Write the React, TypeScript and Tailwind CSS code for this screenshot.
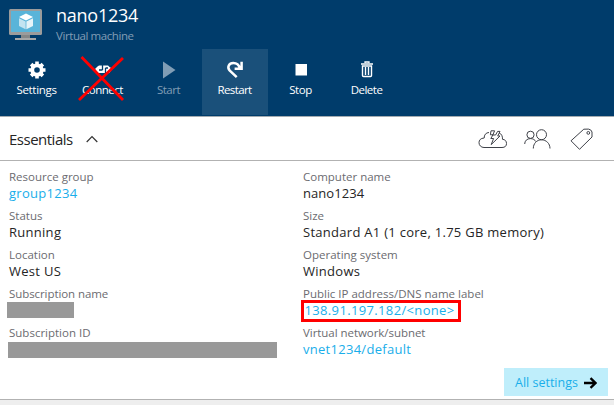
import type { ReactNode } from "react";

type CommandProps = { label: string; icon: ReactNode; tone?: string; tracking?: string };

function Command({ label, icon, tone = "text-white", tracking = "tracking-[-0.5px]" }: CommandProps) {
  return (
    <button className={`flex h-[66px] w-[66px] flex-col items-center pt-3 pr-px ${tone}`}>
      <svg className="h-[18px] w-[18px]" viewBox="0 0 18 18">{icon}</svg>
      <span className={`mt-[3px] h-4 text-[11.5px] leading-4 whitespace-nowrap ${tracking}`}>{label}</span>
    </button>
  );
}

type FieldProps = { label: string; labelTracking?: string; children: ReactNode };

function Field({ label, labelTracking = "", children }: FieldProps) {
  return (
    <div className="h-[39px]">
      <div className={`h-4 text-[11.5px] leading-4 whitespace-nowrap text-[#6b6b70] ${labelTracking}`}>{label}</div>
      <div className="h-4 text-[13px] leading-4 tracking-[0.28px] whitespace-nowrap">{children}</div>
    </div>
  );
}

function MachineIcon() {
  return (
    <svg className="mt-[9px] h-8 w-[33px]" viewBox="0 0 33 32">
      <rect width="33" height="26" rx="1.5" fill="#9b9c9c" />
      <rect x="2" y="2" width="29" height="21" fill="#59b4d9" />
      <path d="M12 26h9v3h6v2H6v-2h6z" fill="#858787" />
      <path d="M6 29h21v2H6z" fill="#a5a6a6" />
      <path d="M17 4.5l7 3.5-7 3.6L10 8z" fill="#fff" />
      <path d="M10 9.2l6.6 3.2v7.8L10 17z" fill="#c3e4f1" />
      <path d="M24 9.2l-6.6 3.2v7.8L24 17z" fill="#e6f4f9" />
    </svg>
  );
}

export default function App() {
  return (
    <div className="flex h-[405px] w-[614px] flex-col overflow-hidden bg-white font-['Open_Sans','Noto_Sans',sans-serif] text-[#252525]">
      <header className="h-[117px] border-b border-[#a3abb1] bg-[#003c6b]">
        <div className="flex h-[49px] pl-[9px]">
          <MachineIcon />
          <div className="ml-[14px] whitespace-nowrap">
            <div className="mt-[3px] h-[25px] text-[18px] leading-6 tracking-[-0.25px] text-white">nano1234</div>
            <div className="h-4 text-[11.5px] leading-4 tracking-[-0.42px] text-[#809db5]">Virtual machine</div>
          </div>
        </div>
        <nav className="flex pl-1">
          <Command
            label="Settings"
            tracking="tracking-[-0.3px]"
            icon={
              <g transform="translate(9 9)">
                <circle r="4.7" fill="none" stroke="currentColor" strokeWidth="3.8" />
                <path d="M-1.8-5.5V-8.5H1.8V-5.5ZM-1.8 5.5V8.5H1.8V5.5ZM-5.5-1.8H-8.5V1.8H-5.5ZM5.5-1.8H8.5V1.8H5.5Z" fill="currentColor" />
                <path d="M-1.8-5.5V-8.3H1.8V-5.5ZM-1.8 5.5V8.3H1.8V5.5ZM-5.5-1.8H-8.3V1.8H-5.5ZM5.5-1.8H8.3V1.8H5.5Z" transform="rotate(45)" fill="currentColor" />
              </g>
            }
          />
          <div className="relative">
            <Command
              label="Connect"
              icon={
                <>
                  <path d="M1 8l2.5-2.5L5 4.5h9l1.5 1.5L18 7.5l-2.5 4.5h-12z" fill="currentColor" />
                  <path d="M8.5 4v5M5 9h3.5M11.5 7H14M11.5 7v5" stroke="#003c6b" strokeWidth="1.3" fill="none" />
                </>
              }
            />
            <svg className="absolute top-0 left-0 h-[66px] w-[66px]" viewBox="0 0 66 66">
              <path d="M11.5 8L53 51M53 9L9 51" stroke="#f00" strokeWidth="2.8" />
            </svg>
          </div>
          <Command label="Start" tone="text-[#809db5]" icon={<path d="M3 0.5L15.5 9 3 17.5z" fill="currentColor" />} />
          <Command
            label="Restart"
            tracking="tracking-[-0.6px]"
            tone="bg-[#1a507a] text-white"
            icon={<path d="M10.7 16.2L3.8 9.6C0.7 6.3 3 1.9 7.3 1.9c4 0 5.8 2.4 6.6 5.2M8.6 7.8h7V0.8" fill="none" stroke="currentColor" strokeWidth="2.5" />}
          />
          <Command label="Stop" icon={<path d="M3.5 3h11.5v11.5H3.5z" fill="currentColor" />} />
          <Command
            label="Delete"
            icon={
              <>
                <path d="M7 2V1h4v1M3 3h12" fill="none" stroke="currentColor" strokeWidth="1.3" />
                <path d="M4.5 5v9.5q0 1 1 1h7q1 0 1-1V5zM7.5 6v8M10.5 6v8" fill="none" stroke="currentColor" strokeWidth="1.4" />
              </>
            }
          />
        </nav>
      </header>

      <section className="flex h-11 items-center border-b border-[#b2b2b2] pr-[21px] pl-[9px]">
        <h2 className="w-[65px] text-[15px] leading-5 tracking-[-0.5px]">Essentials</h2>
        <svg className="ml-3 h-3 w-3" viewBox="0 0 12 12" fill="none" stroke="#333" strokeWidth="1.2">
          <path d="M0.7 9L6 3.5 11.3 9" />
        </svg>
        <div className="ml-auto flex text-[#3f4249]">
          <svg className="h-[22px] w-[29px]" viewBox="0 0 29 22" fill="none" stroke="currentColor" strokeWidth="1">
            <path d="M11 4.5C8 4.5 6 7 6.2 10 2.5 10.2 1 12.2 1 14.7S3 19.5 6 19.5h18c3 0 4.5-1.5 4.5-4s-1.5-4-4-4.2c.2-3-1-5.6-3.5-6.4" />
            <path d="M13 2.8h3.6L14.8 7h2.8l2-3.6h2.4L19.7 8H22l-8.8 8.6 2.4-6.1h-2.8L15 6.8h-2.6z" />
          </svg>
          <svg className="ml-[17px] h-[22px] w-[27px]" viewBox="0 0 27 22" fill="none" stroke="currentColor" strokeWidth="1">
            <circle cx="17.5" cy="6.7" r="5" />
            <circle cx="6.5" cy="6.8" r="3.6" />
            <path d="M9.3 20.5c0-5 3.5-8.7 8.2-8.7s8.5 3.7 8.5 8.7M0.7 16C0.7 12.8 3 10.6 6.5 10.6c2.6 0 4.4 1.2 5.3 3" />
          </svg>
          <svg className="ml-[19px] h-[22px] w-[23px]" viewBox="0 0 23 22" fill="none" stroke="currentColor" strokeWidth="1">
            <path d="M13.8 1.2L1 12.8l8.5 8.5L22 9V4q-.8-2.6-3.5-2.9z" />
            <circle cx="18.3" cy="4.9" r="1.4" />
          </svg>
        </div>
      </section>

      <section className="flex h-[238px] flex-col">
        <div className="flex h-[207px] pt-[8px] pl-[9px]">
          <div className="w-[294px]">
            <Field label="Resource group"><a className="text-[#19aeea]">group1234</a></Field>
            <Field label="Status">Running</Field>
            <Field label="Location">West US</Field>
            <Field label="Subscription name" labelTracking="tracking-[-0.08px]">
              <div className="-ml-0.5 h-4 w-[67px] bg-[#999]" />
            </Field>
            <Field label="Subscription ID">
              <div className="-ml-px h-4 w-[269px] translate-y-px bg-[#999]" />
            </Field>
          </div>
          <div className="w-[290px]">
            <Field label="Computer name"><span className="tracking-[0.05px]">nano1234</span></Field>
            <Field label="Size">Standard A1 (1 core, 1.75 GB memory)</Field>
            <Field label="Operating system">Windows</Field>
            <Field label="Public IP address/DNS name label">
              <div className="relative">
                <a className="pl-[1.5px] tracking-[0.35px] text-[#19aeea]">138.91.197.182/&lt;none&gt;</a>
                <div className="absolute -top-0.5 -left-0.5 h-[22px] w-[160px] border-[3px] border-[#f00]" />
              </div>
            </Field>
            <Field label="Virtual network/subnet" labelTracking="tracking-[-0.05px]"><a className="text-[#19aeea]">vnet1234/default</a></Field>
          </div>
        </div>
        <button className="mr-[6px] ml-auto flex h-7 w-[104px] shrink-0 items-center bg-[#bfeefb] pt-0.5 pl-[11px] text-[12.5px] text-[#19aeea]">
          <span className="w-[64px] text-left whitespace-nowrap">All settings</span>
          <svg className="ml-[5px] h-3 w-[13px]" viewBox="0 0 13 12" fill="none" stroke="#000" strokeWidth="2.3">
            <path d="M0 6h11M6.5 1.2L11.5 6l-5 4.8" />
          </svg>
        </button>
      </section>
      <footer className="h-1.5 border-t border-[#b2b2b2] bg-[#eee]" />
    </div>
  );
}
